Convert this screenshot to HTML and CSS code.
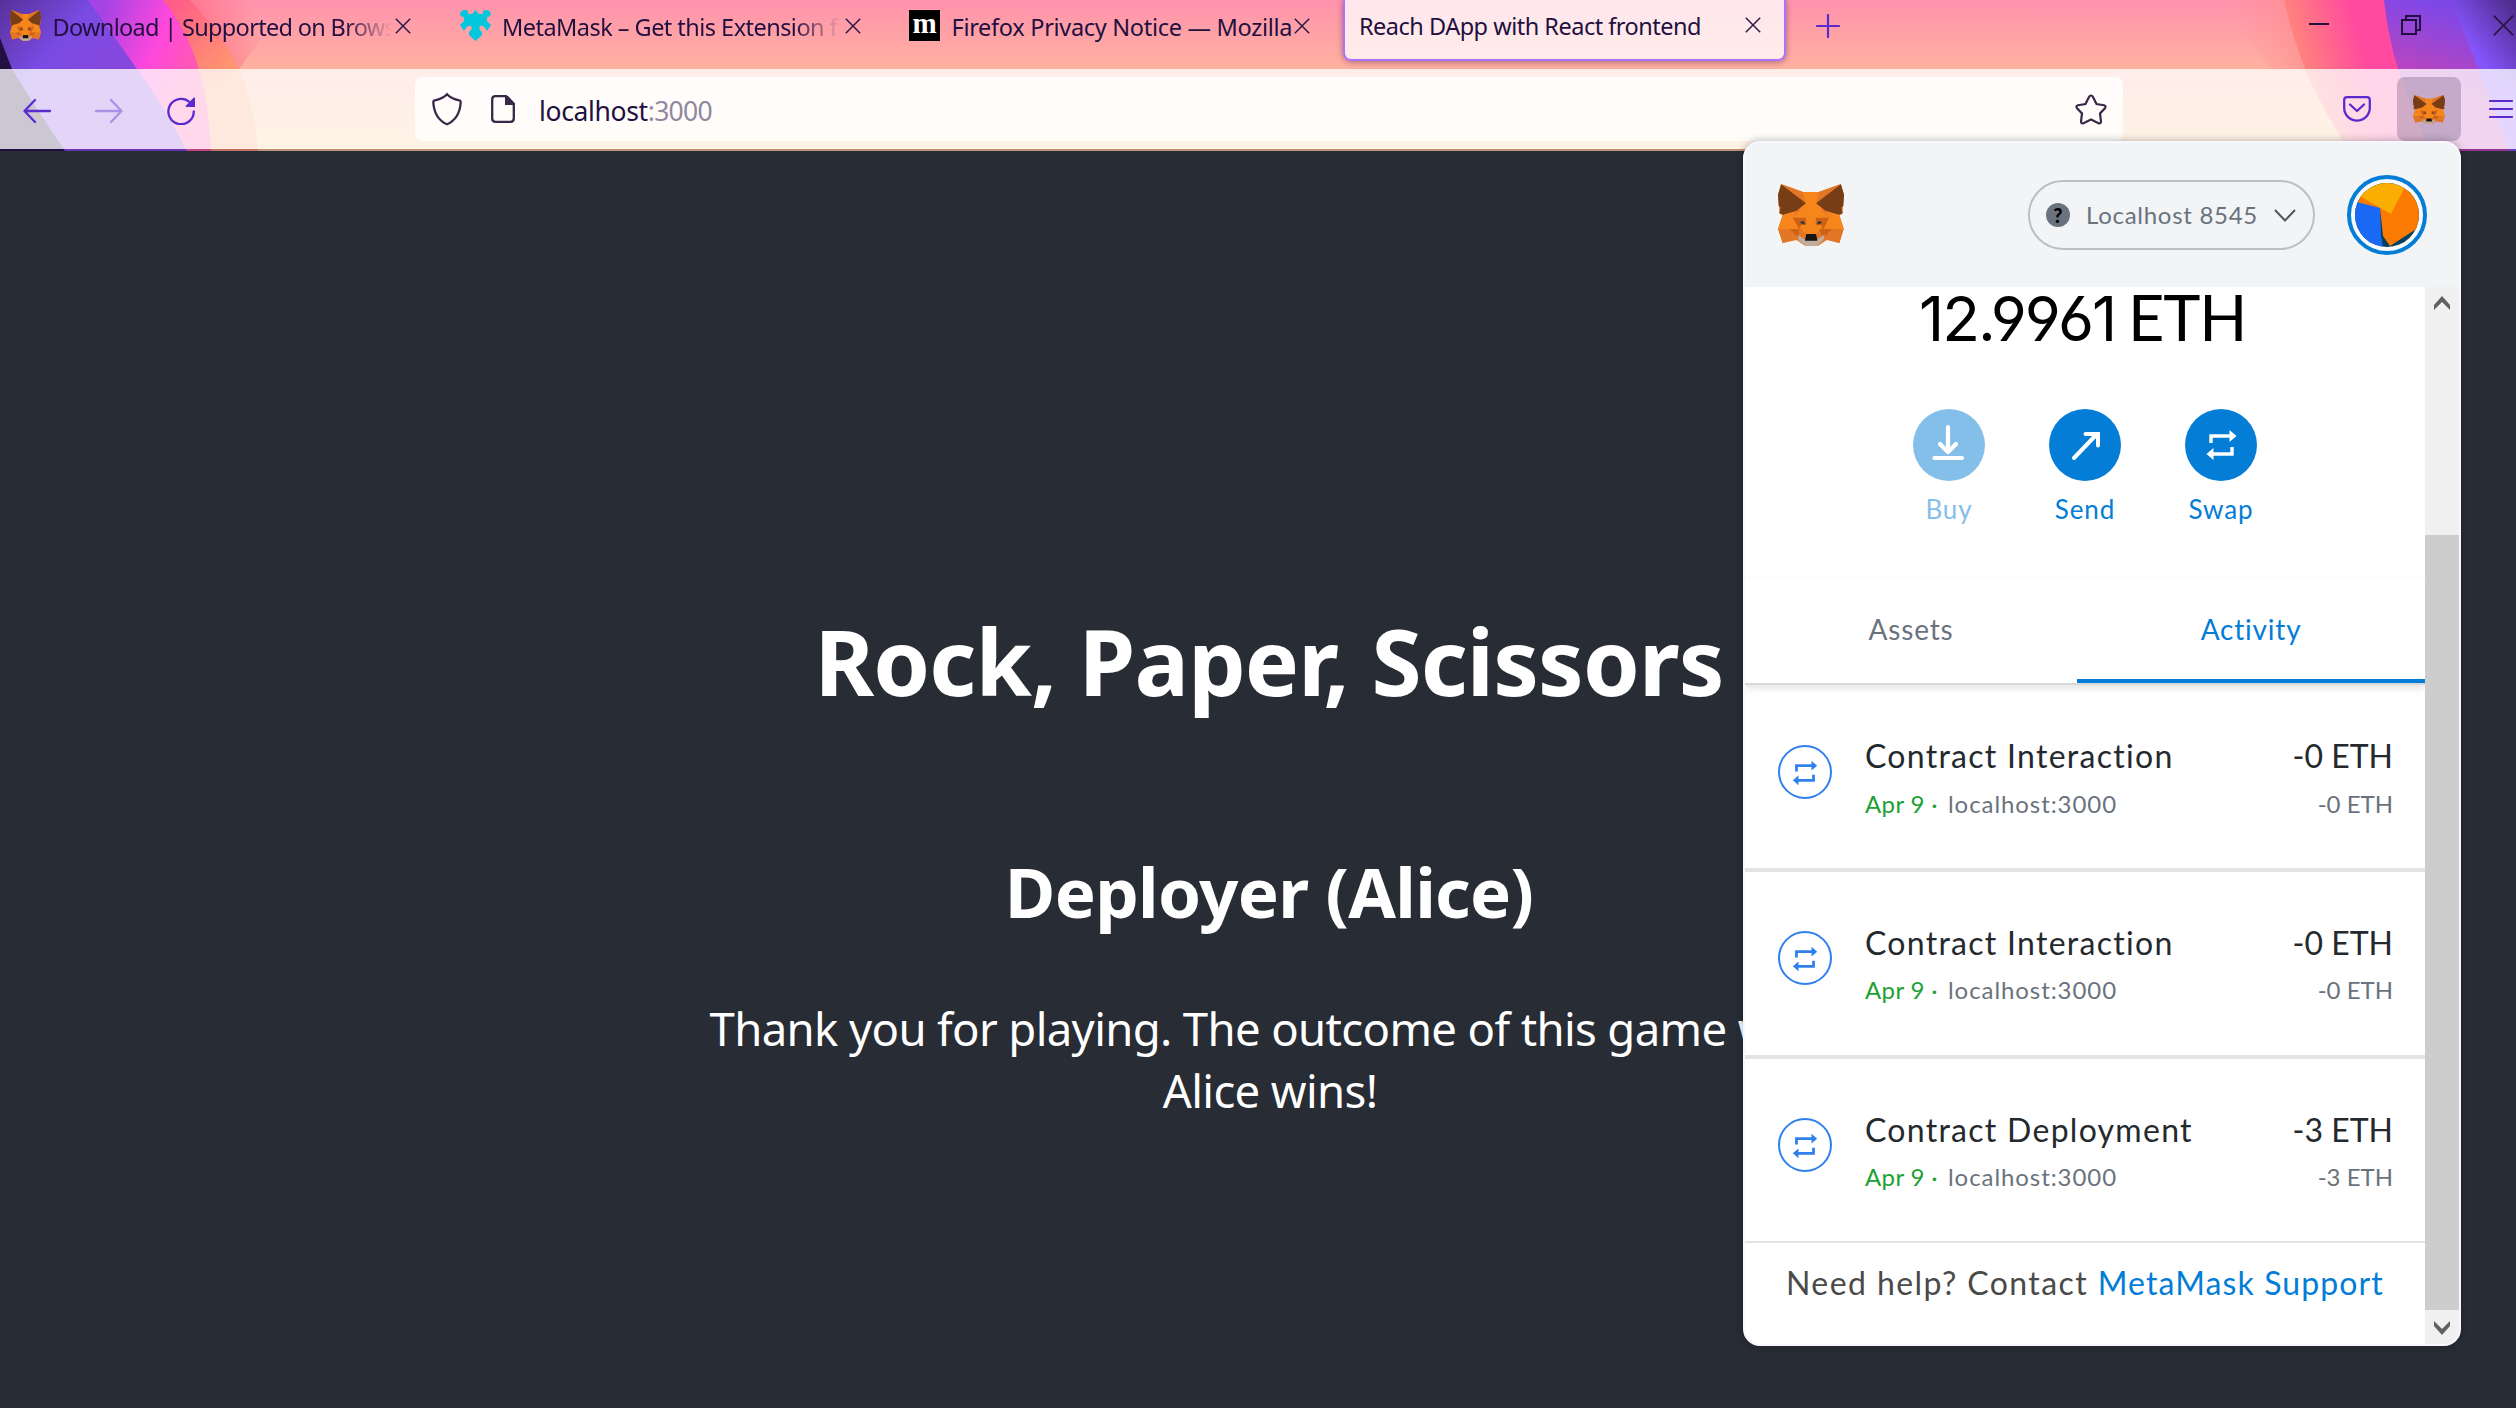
FILE: index.html
```html
<!DOCTYPE html>
<html lang="en">
<head>
<meta charset="utf-8">
<title>Reach DApp with React frontend</title>
<link rel="stylesheet" href="styles.css">
</head>
<body>
<svg width="0" height="0" class="defs" aria-hidden="true">
  <symbol id="fox" viewBox="117 42 196 186" preserveAspectRatio="none">
    <path fill="#e27625" d="M127 42 191 66H238L303 42 313 74 308 133 299 134 312 176 299 219 262 210 236 227H197L172 210 131 219 117 177 131 134 122 132 117 74z"/>
    <path fill="#f6851b" d="M191 66H238L246 118 268 143 252 178H180L161 142 184 120zM131 134 172 122 161 142 180 177H118zM299 134 258 122 268 142 252 177H312z"/>
    <path fill="#e27625" d="M131 44 191 66 198 99zM299 44 238 66 231 99zM118 177H165L174 205 131 219zM312 177H265L256 205 299 219z"/>
    <path fill="#cd6116" d="M161 143H199L204 165 180 177zM268 143H230L225 165 252 177zM152 177H179V203zM278 177H237L252 205z"/>
    <path fill="#f6851b" d="M199 99H231L228 192H202zM180 168 199 192 202 162zM250 168 231 192 228 162z"/>
    <path fill="#763d16" d="M126 43 200 100 172 122 131 134 121 129 125 112 119 108 117 74zM304 43 230 100 258 122 299 134 309 129 305 112 311 108 313 74z"/>
    <path fill="#c0ad9e" d="M176 195 199 210H232L256 193 252 210 232 227H199L178 211z"/>
    <path fill="#161616" d="M201 192H230L234 212H197z"/>
    <path fill="#233447" d="M181 158 192 152 198 164zM249 158 238 152 232 164z"/>
  </symbol>
  <symbol id="x" viewBox="0 0 16 16"><path d="M.8.8 15.2 15.2M15.2.8.8 15.2" fill="none" stroke="#2b1a45" stroke-width="1.5"/></symbol>
  <symbol id="swap" viewBox="0 0 32 32">
    <path d="M5.5 14V7H25M26.500 18V25H7" fill="none" stroke="currentColor" stroke-width="3.400"/>
    <path fill="currentColor" d="M24 1 31 7 24 13zM8 19 1 25 8 31z"/>
  </symbol>
</svg>

<header class="chrome">
  <svg class="theme" width="2516" height="151" viewBox="0 0 2516 151" aria-hidden="true">
    <defs>
      <linearGradient id="sky" x2="0" y2="1"><stop offset="0" stop-color="#ff92ad"/><stop offset=".46" stop-color="#ffb2a0"/><stop offset="1" stop-color="#ffca90"/></linearGradient>
      <linearGradient id="lp" gradientUnits="userSpaceOnUse" x1="0" y1="0" x2="90" y2="80"><stop offset="0" stop-color="#57309a"/><stop offset=".6" stop-color="#794be3"/><stop offset="1" stop-color="#8548de"/></linearGradient>
      <linearGradient id="lm" gradientUnits="userSpaceOnUse" x1="95" y1="30" x2="200" y2="75"><stop offset="0" stop-color="#a643e4"/><stop offset=".55" stop-color="#ff48dc"/><stop offset="1" stop-color="#ff5ca8"/></linearGradient>
      <linearGradient id="lo" gradientUnits="userSpaceOnUse" x1="170" y1="0" x2="235" y2="75"><stop offset="0" stop-color="#ff5a88"/><stop offset="1" stop-color="#ff9c6e"/></linearGradient>
      <linearGradient id="lg" gradientUnits="userSpaceOnUse" x1="180" y1="30" x2="250" y2="0"><stop offset="0" stop-color="#ff6f88"/><stop offset="1" stop-color="#ff6f88" stop-opacity="0"/></linearGradient>
      <linearGradient id="rg" gradientUnits="userSpaceOnUse" x1="2240" y1="30" x2="2310" y2="10"><stop offset="0" stop-color="#ff8f90" stop-opacity="0"/><stop offset="1" stop-color="#ff8f90"/></linearGradient>
      <linearGradient id="rp" gradientUnits="userSpaceOnUse" x1="2290" y1="50" x2="2375" y2="25"><stop offset="0" stop-color="#ff8a78"/><stop offset=".8" stop-color="#ff4a9f"/></linearGradient>
      <linearGradient id="rv" gradientUnits="userSpaceOnUse" x1="2430" y1="0" x2="2405" y2="85"><stop offset="0" stop-color="#7d47e8"/><stop offset="1" stop-color="#c445b8"/></linearGradient>
      <linearGradient id="rd" gradientUnits="userSpaceOnUse" x1="2516" y1="10" x2="2470" y2="45"><stop offset="0" stop-color="#4f2d8e"/><stop offset="1" stop-color="#8554fb"/></linearGradient>
    </defs>
    <rect width="2516" height="151" fill="url(#sky)"/>
    <path fill="url(#lg)" d="M190 0H290L239 69z"/>
    <path fill="url(#lo)" d="M0 0H190Q225 38 239 69T258 151H0z"/>
    <path fill="url(#lm)" d="M0 0H163Q187 30 198 66T211 151H0z"/>
    <path fill="url(#lp)" d="M0 0H88L137 69Q168 112 187 151H0z"/>
    <path fill="#221040" d="M0 38 12 69Q28 96 65 151H0z"/>
    <path fill="url(#rg)" d="M2220 0H2284Q2290 35 2305 69H2270z"/>
    <path fill="url(#rp)" d="M2284 0Q2291 35 2305 69T2349 151H2516V0z"/>
    <path fill="url(#rv)" d="M2384 0Q2388 37 2398 69T2430 151H2516V0z"/>
    <path fill="url(#rd)" d="M2452 0 2478 69 2510 151H2516V0z"/>
  </svg>

  <div class="tabs">
    <div class="tab"><svg class="favicon"><use href="#fox"/></svg><span class="label fade t1">Download | Supported on Brows</span><svg class="close"><use href="#x"/></svg></div>
    <div class="tab"><svg class="favicon" viewBox="0 0 31 31"><path fill="#05c7dc" d="M15.500 0 19 4H23Q22 0 26 0T31 4Q30 7 27 7L27 11 31 15 27 21Q24 15 20 16 18 19 22 22L22 25 15.500 31 9 25V22Q13 19 11 16 7 15 4 21L0 15 4 11V7Q0 7 0 4 1 0 5 0T8 4H12z"/></svg><span class="label fade t2">MetaMask – Get this Extension f</span><svg class="close"><use href="#x"/></svg></div>
    <div class="tab"><span class="favicon moz">m</span><span class="label t3">Firefox Privacy Notice — Mozilla</span><svg class="close"><use href="#x"/></svg></div>
    <div class="tab active"><span class="label t4">Reach DApp with React frontend</span><svg class="close"><use href="#x"/></svg></div>
    <svg class="plus" viewBox="0 0 24 24"><path d="M12 1V23M1 12H23" stroke="#5b2bd0" stroke-width="2.200" stroke-linecap="round"/></svg>
    <div class="window">
      <svg width="20" height="20"><path d="M0 9H20" stroke="#221040" stroke-width="2"/></svg>
      <svg width="20" height="20"><path d="M5 5V1H19V15H16M1 5H15V19H1z" fill="none" stroke="#221040" stroke-width="2"/></svg>
      <svg width="21" height="21"><path d="M.7.7 20.300 20.300M20.300.7.7 20.300" stroke="#2a1747" stroke-width="1.800"/></svg>
    </div>
  </div>

  <div class="toolbar">
    <svg class="nav" viewBox="0 0 28 28"><path d="M27 14H1.500M12 3 1.500 14 12 25" fill="none" stroke="#5b2bd0" stroke-width="2.300" stroke-linecap="round" stroke-linejoin="round"/></svg>
    <svg class="nav" viewBox="0 0 28 28"><path d="M1 14H26.500M16 3 26.500 14 16 25" fill="none" stroke="#ac8fe6" stroke-width="2.300" stroke-linecap="round" stroke-linejoin="round"/></svg>
    <svg class="nav" viewBox="0 0 28 28"><path d="M22.500 5A12.700 12.700 0 1 0 26.800 14.500" fill="none" stroke="#5b2bd0" stroke-width="2.300" stroke-linecap="round"/><path fill="#5b2bd0" d="M28 .5V10H19Q18.200 9.500 19 8.500L26.500.8z"/></svg>
    <div class="urlbar">
      <svg width="30" height="34" viewBox="0 0 30 34"><path d="M15 2.200C11.500 6 7 7.500 2.800 8.300 1.500 8.500 1.300 9.500 1.300 10.500 2 20 5 28 15 32.300 25 28 28 20 28.700 10.500 28.700 9.500 28.500 8.500 27.200 8.300 23 7.500 18.500 6 15 2.200z" fill="none" stroke="#372849" stroke-width="2.300"/></svg>
      <svg class="doc" width="24" height="28" viewBox="0 0 24 28"><path d="M15 1.200H4.500Q1.200 1.200 1.200 4.500V23.500Q1.200 26.800 4.500 26.800H19.500Q22.800 26.800 22.800 23.500V9z" fill="none" stroke="#372849" stroke-width="2.300"/><path fill="#372849" d="M14 1V10H23.500V8L17 1z"/></svg>
      <span class="url">localhost<span class="port">:3000</span></span>
      <svg class="star" width="32" height="31" viewBox="0 0 32 31"><path d="M16 1.500Q17.200 1.500 18 3L21.500 10 29 11.200Q31.500 12 30 14.200L25 19.500 26 27.500Q26 30 23.500 29.300L16 25.500 8.500 29.300Q6 30 6 27.500L7 19.500 2 14.200Q.5 12 3 11.200L10.500 10 14 3Q14.800 1.500 16 1.500z" fill="none" stroke="#372849" stroke-width="2.200"/></svg>
    </div>
    <svg class="pocket" width="28" height="26" viewBox="0 0 28 26"><path d="M4 1.200H24Q26.800 1.200 26.800 4V12A12.800 12.600 0 0 1 1.200 12V4Q1.200 1.200 4 1.200zM7 8.500 14 15 21 8.500" fill="none" stroke="#5b2bd0" stroke-width="2.300" stroke-linecap="round" stroke-linejoin="round"/></svg>
    <div class="extension"><svg width="32" height="29"><use href="#fox"/></svg></div>
    <svg class="burger" width="24" height="20"><path d="M1 2H23M1 10H23M1 18H23" stroke="#5b2bd0" stroke-width="2.200" stroke-linecap="round"/></svg>
  </div>
</header>

<main class="page">
  <h1>Rock, Paper, Scissors</h1>
  <h2>Deployer (Alice)</h2>
  <p>Thank you for playing. The outcome of this game was:<br>Alice wins!</p>
</main>

<section class="popup">
  <div class="popup-head">
    <svg class="logo" width="66" height="62"><use href="#fox"/></svg>
    <div class="network">
      <span class="question">?</span>
      <span class="network-name">Localhost 8545</span>
      <svg width="22" height="13"><path d="M1 1 11 11.500 21 1" fill="none" stroke="#505860" stroke-width="2"/></svg>
    </div>
    <svg class="avatar" width="80" height="80" viewBox="0 0 80 80"><defs><clipPath id="face"><circle cx="40" cy="40" r="32"/></clipPath></defs><circle cx="40" cy="40" r="38" fill="#fff" fill-opacity=".5" stroke="#037dd6" stroke-width="4"/><g clip-path="url(#face)"><rect width="80" height="80" fill="#033f5e"/><path fill="#1a69f5" d="M0 25 33 26 34 60 37 80H0z"/><path fill="#fb7a02" d="M57 12 80 30V47L43 71 36 61 33 33 10 27V20z"/><path fill="#faae02" d="M0 14 44 39 60 8V0H0z"/></g></svg>
  </div>
  <div class="popup-body">
    <div class="content">
      <div class="balance"><span class="figure">12.9961</span><span class="unit">ETH</span></div>
      <div class="actions">
        <div class="action off"><svg width="72" height="72"><circle cx="36" cy="36" r="36" fill="#84bfea"/><path d="M35 18V41M27 35 35 43 43 35M21.500 49H49" fill="none" stroke="#fff" stroke-width="4.200" stroke-linecap="round" stroke-linejoin="round"/></svg><span>Buy</span></div>
        <div class="action"><svg width="72" height="72"><circle cx="36" cy="36" r="36" fill="#037dd6"/><path d="M25 49 48 25M36.500 25H49V36.500" fill="none" stroke="#fff" stroke-width="4" stroke-linecap="round"/></svg><span>Send</span></div>
        <div class="action"><svg width="72" height="72"><circle cx="36" cy="36" r="36" fill="#037dd6"/><svg x="20" y="20" width="33" height="32" color="#fff"><use href="#swap"/></svg></svg><span>Swap</span></div>
      </div>
      <div class="switch">
        <div class="pane">Assets</div>
        <div class="pane current">Activity</div>
      </div>
      <div class="row">
        <svg class="tx"><use href="#swap" x="12" y="13" width="26" height="26"/></svg>
        <div class="info"><div class="title">Contract Interaction</div><div class="sub"><b>Apr 9 ·</b><span>localhost:3000</span></div></div>
        <div class="amount"><div class="title">-0 ETH</div><div class="sub">-0 ETH</div></div>
      </div>
      <div class="row">
        <svg class="tx"><use href="#swap" x="12" y="13" width="26" height="26"/></svg>
        <div class="info"><div class="title">Contract Interaction</div><div class="sub"><b>Apr 9 ·</b><span>localhost:3000</span></div></div>
        <div class="amount"><div class="title">-0 ETH</div><div class="sub">-0 ETH</div></div>
      </div>
      <div class="row">
        <svg class="tx"><use href="#swap" x="12" y="13" width="26" height="26"/></svg>
        <div class="info"><div class="title">Contract Deployment</div><div class="sub"><b>Apr 9 ·</b><span>localhost:3000</span></div></div>
        <div class="amount"><div class="title">-3 ETH</div><div class="sub">-3 ETH</div></div>
      </div>
      <div class="help">Need help? Contact <a>MetaMask Support</a></div>
    </div>
    <div class="scrollbar">
      <svg width="16" height="14"><path fill="#606060" d="M0 9 8 0 16 9V14L8 6 0 14z"/></svg>
      <div class="thumb"></div>
      <svg width="16" height="14"><path fill="#606060" d="M0 5 8 14 16 5V0L8 8 0 0z"/></svg>
    </div>
  </div>
</section>
</body>
</html>
```
FILE: styles.css
```css
* { box-sizing: border-box; }
body {
  margin: 0;
  width: 2516px;
  height: 1408px;
  overflow: hidden;
  position: relative;
  background: #282c34;
  font-family: "Noto Sans", "Open Sans", sans-serif;
}
svg { display: block; flex: none; }
.defs { position: absolute; }

/* Browser chrome */
.chrome { position: relative; height: 151px; color: #221040; font-size: 23.500px; }
.theme { position: absolute; inset: 0; }
.tabs { position: relative; display: flex; height: 69px; }
.tab {
  display: flex;
  align-items: center;
  width: 449.5px;
  height: 51px;
  padding-left: 10px;
}
.favicon { width: 31px; height: 31px; margin-right: 11.500px; flex: none; }
.moz {
  background: #000;
  color: #fff;
  font: bold 29px/26px "Liberation Serif", serif;
  text-align: center;
}
.label { width: 339px; margin-right: 3.500px; padding-top: 2px; white-space: nowrap; flex: none; }
.fade { mask-image: linear-gradient(to right, #000 86%, transparent); }
.t1 { letter-spacing: -.68px; }
.t2 { letter-spacing: -.54px; }
.t3 { letter-spacing: -.3px; }
.t4 { letter-spacing: -.5px; }
.close { width: 16px; height: 16px; }
.tab.active {
  width: 443px;
  height: 61px;
  margin-left: -5.5px;
  padding: 0 0 10px 14px;
  background: rgba(255, 255, 255, .77);
  border: 2px solid #ab71ff;
  border-top: 0;
  border-radius: 0 0 8px 8px;
  box-shadow: 0 1px 6px rgba(60, 20, 60, .45);
}
.active .label { width: 345px; margin-right: 41px; }
.plus { width: 24px; height: 24px; margin: 14px 0 0 30px; }
.window { display: flex; gap: 72px; margin: 15px 2px 0 auto; }
.toolbar {
  position: relative;
  display: flex;
  align-items: center;
  height: 80px;
  padding-left: 23px;
  background: rgba(255, 255, 255, .77);
}
.toolbar::after {
  content: "";
  position: absolute;
  inset: 80px 0 auto;
  height: 2px;
  background: rgba(34, 16, 64, .3);
}
.nav { width: 28px; height: 28px; margin: 3px 44px 0 0; }
.urlbar {
  display: flex;
  align-items: center;
  width: 1708px;
  height: 64px;
  margin-left: 176px;
  padding: 0 16px 0 17px;
  background: rgba(255, 255, 255, .8);
  border-radius: 8px;
}
.doc { margin-left: 29px; }
.url { margin-left: 24px; padding-top: 3px; font-size: 26.500px; letter-spacing: -.35px; }
.port { color: #8f889f; letter-spacing: -.75px; }
.star { margin-left: auto; }
.pocket { margin-left: 220px; }
.extension {
  display: grid;
  place-items: center;
  width: 64px;
  height: 64px;
  margin-left: 26px;
  border-radius: 8px;
  background: rgba(34, 16, 64, .21);
}
.burger { margin-left: 28px; }

/* Game page */
.page { padding-left: 22px; color: #fff; text-align: center; white-space: nowrap; }
.page h1 { margin: 0; padding-top: 450px; font-size: 91px; line-height: 120px; letter-spacing: -.850px; }
.page h2 { margin: 0; padding-top: 125px; font-size: 69px; line-height: 90px; letter-spacing: -.7px; }
.page p { margin: 0; padding: 60.500px 0 0 2px; font-size: 45.500px; line-height: 62.500px; letter-spacing: -.64px; }

/* Wallet popup */
.popup {
  position: absolute;
  left: 1743px;
  top: 141px;
  width: 718px;
  height: 1205px;
  border: 2px solid #f8f6ff;
  border-radius: 17px;
  overflow: hidden;
  background: #fff;
  font-family: Lato, sans-serif;
  box-shadow: 0 0 8px rgba(0, 0, 0, .3);
  white-space: nowrap;
}
.popup-head { display: flex; align-items: center; height: 144px; padding: 0 32px 0 33px; background: #f2f4f6; }
.network {
  display: flex;
  align-items: center;
  width: 287px;
  height: 70px;
  margin: 0 32px 0 auto;
  padding: 0 17px 0 16px;
  border: 2px solid #bbc0c5;
  border-radius: 35px;
  color: #6a737d;
  font-size: 24px;
}
.network-name { letter-spacing: .72px; margin-top: -1px; }
.question {
  width: 24px;
  height: 24px;
  margin-right: 16px;
  border-radius: 50%;
  background: #6a737d;
  color: #000;
  font: 900 20px/24px Lato, sans-serif;
  text-align: center;
}
.network svg { margin-left: auto; }
.popup-body { display: flex; height: 1057px; }
.content { width: 680px; }
.balance { display: flex; height: 60px; padding-left: 174px; font-size: 63px; line-height: 60px; color: #000; }
.figure { width: 209px; font-family: Inter, sans-serif; font-size: 62px; line-height: 63px; letter-spacing: -2px; font-feature-settings: "cv03", "cv04"; }
.unit { letter-spacing: -1.200px; }
.actions { display: flex; justify-content: center; gap: 64px; height: 230px; padding-top: 62px; }
.action { display: flex; flex-direction: column; align-items: center; gap: 13px; width: 72px; color: #037dd6; font-size: 26px; line-height: 30px; letter-spacing: .9px; }
.off { color: #84bfea; }
.switch {
  display: flex;
  height: 108px;
  border-top: 1px solid #fafafa;
  border-bottom: 2px solid #d6d8da;
  box-shadow: 0 3px 8px rgba(0, 0, 0, .12);
  clip-path: inset(0 0 -12px 0);
  font-size: 28px;
  line-height: 102px;
  letter-spacing: .8px;
  text-align: center;
  color: #6a737d;
}
.pane { width: 332px; }
.current { width: 348px; color: #037dd6; border-bottom: 4px solid #037dd6; }
.row { display: flex; height: 187px; padding: 52px 32px 0 33px; border-bottom: 4px solid #e3e4e4; }
.row + .row { padding-top: 51px; }
.row:nth-last-child(2) { height: 184px; border-bottom-width: 2px; }
.tx { width: 54px; height: 54px; margin-top: 8px; border: 2px solid #2f80ed; border-radius: 50%; color: #2f80ed; }
.info { margin-left: 33px; letter-spacing: 1.280px; }
.amount { margin-left: auto; text-align: right; }
.title { font-size: 32px; line-height: 38px; color: #24292e; }
.sub { margin-top: 15px; font-size: 24px; line-height: 28px; color: #6a737d; letter-spacing: .93px; }
.amount .sub { letter-spacing: 0; }
.sub b { font-weight: 400; color: #1ba134; margin-right: 10px; letter-spacing: .38px; }
.row + .row .title { line-height: 40px; }
.row + .row .sub { margin-top: 13px; }
.help { padding: 21px 0 0 41px; font-size: 32px; line-height: 38px; letter-spacing: 1.420px; color: #4a4a4a; }
.help a { color: #037dd6; letter-spacing: 1.100px; }
.scrollbar { display: flex; flex-direction: column; align-items: center; width: 34px; padding: 9px 0; background: #f0f0f0; }
.thumb { width: 34px; height: 775px; margin: 225px 0 auto; background: #cdcdcd; }
```
